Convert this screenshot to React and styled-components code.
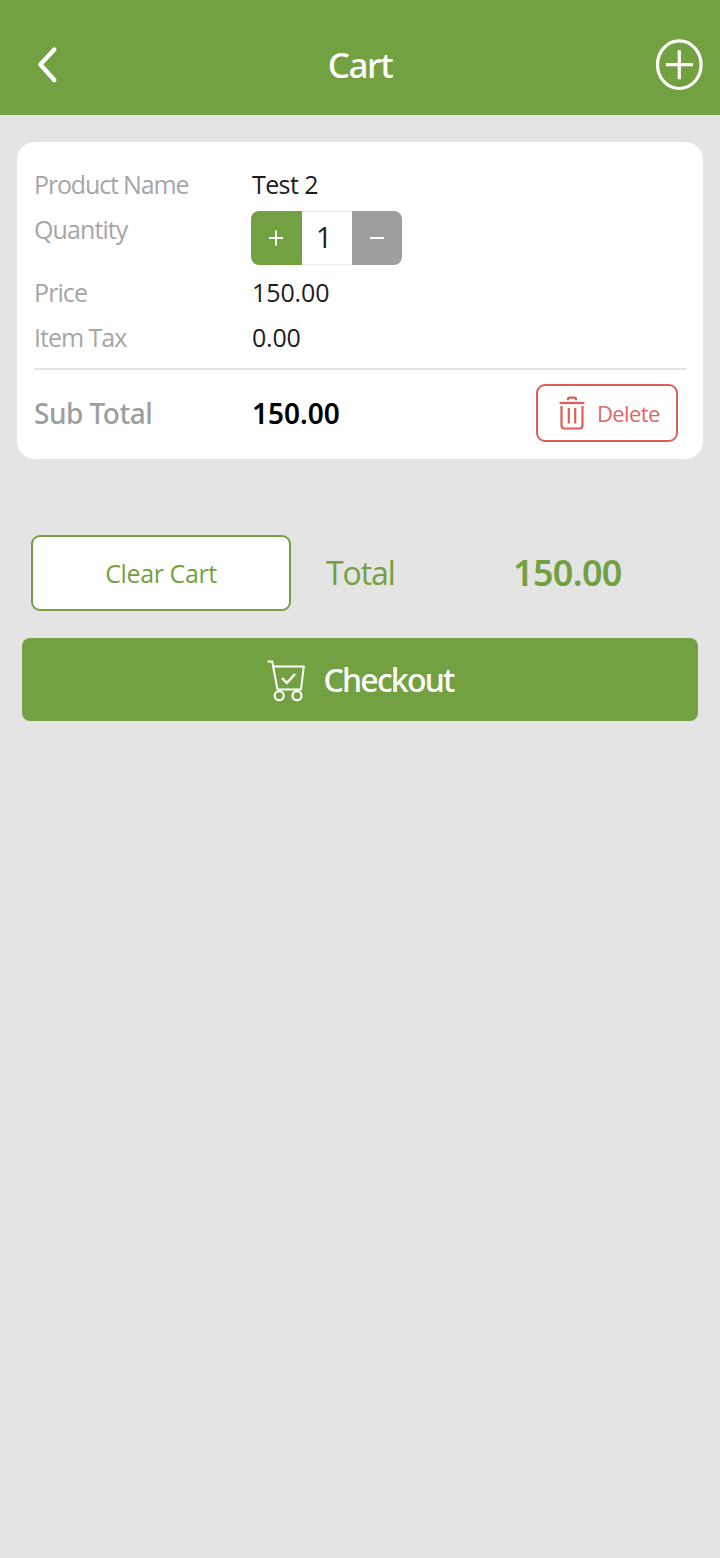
import React, { useState } from 'react';
import styled, { createGlobalStyle } from 'styled-components';

const PRICE = 150;

function App() {
  const [quantity, setQuantity] = useState(1);
  const subTotal = (PRICE * quantity).toFixed(2);

  return (
    <>
      <GlobalStyle />
      <Header>
        <IconButton aria-label='back'>
          <BackIcon />
        </IconButton>
        <Title>Cart</Title>
        <IconButton aria-label='add product'>
          <AddIcon />
        </IconButton>
      </Header>
      <Card>
        <Row>
          <Label $spacing='-1.15px'>Product Name</Label>
          <Value $spacing='-0.6px'>Test 2</Value>
        </Row>
        <Row $height='63px'>
          <Label $spacing='-0.9px'>Quantity</Label>
          <Stepper>
            <StepButton
              $color='#73a142'
              aria-label='increase'
              onClick={() => setQuantity(quantity + 1)}
            >
              <StepIcon plus />
            </StepButton>
            <Count>{quantity}</Count>
            <StepButton
              $color='#9e9e9e'
              aria-label='decrease'
              onClick={() => setQuantity(Math.max(1, quantity - 1))}
            >
              <StepIcon />
            </StepButton>
          </Stepper>
        </Row>
        <Row>
          <Label $spacing='-0.9px'>Price</Label>
          <Value $spacing='-0.1px'>{PRICE.toFixed(2)}</Value>
        </Row>
        <Row>
          <Label $spacing='-1px'>Item Tax</Label>
          <Value $spacing='-0.2px'>0.00</Value>
        </Row>
        <CardFooter>
          <SubLabel>Sub Total</SubLabel>
          <SubValue>{subTotal}</SubValue>
          <DeleteButton>
            <TrashIcon />
            <span>Delete</span>
          </DeleteButton>
        </CardFooter>
      </Card>
      <Summary>
        <ClearButton>Clear Cart</ClearButton>
        <TotalLabel>Total</TotalLabel>
        <TotalValue>{subTotal}</TotalValue>
      </Summary>
      <CheckoutButton>
        <CartIcon />
        <span>Checkout</span>
      </CheckoutButton>
    </>
  );
}

const BackIcon = () => (
  <svg width='24' height='40' viewBox='0 0 24 40' fill='none'>
    <path
      d='M19.3 4.5L5.3 19.5L19.3 35'
      stroke='#fff'
      strokeWidth='4.4'
      strokeLinecap='round'
      strokeLinejoin='round'
    />
  </svg>
);

const AddIcon = () => (
  <svg width='48' height='52' viewBox='0 0 48 52' fill='none' stroke='#fff'>
    <ellipse cx='24.3' cy='25.7' rx='21.8' ry='23.8' strokeWidth='3.2' />
    <path d='M24.3 11.2V40.2M10.8 25.7H37.8' strokeWidth='3.2' />
  </svg>
);

const StepIcon = ({ plus }) => (
  <svg width='16' height='16' viewBox='0 0 16 16' stroke='#fff'>
    <path d={plus ? 'M1 8H15M8 0.5V15.5' : 'M1 8H15'} strokeWidth='1.8' />
  </svg>
);

const TrashIcon = () => (
  <svg
    width='26'
    height='34'
    viewBox='0 0 26 34'
    fill='none'
    stroke='#dc5f57'
    strokeWidth='2.2'
  >
    <path d='M0.5 7H25.5' />
    <path d='M9 4.2V3.2Q9 1.6 10.5 1.6H15.5Q17 1.6 17 3.2V4.2' />
    <path d='M2.5 10V29.5Q2.5 32.5 5.5 32.5H20.5Q23.5 32.5 23.5 29.5V10' />
    <path d='M9.8 12V27.5M16.2 12V27.5' />
  </svg>
);

const CartIcon = () => (
  <svg
    width='38'
    height='42'
    viewBox='0 0 38 42'
    fill='none'
    stroke='#fff'
    strokeWidth='2'
  >
    <path d='M0.5 1.5H5.2L10.5 29.5H34L36.8 6.5H6.2' strokeLinejoin='round' />
    <path d='M15 18L19.8 23L28 14' strokeWidth='2.4' />
    <circle cx='12.2' cy='35.7' r='4.5' strokeWidth='2.2' />
    <circle cx='30' cy='35.7' r='4.5' strokeWidth='2.2' />
  </svg>
);

const GlobalStyle = createGlobalStyle`
  * {
    box-sizing: border-box;
  }
  body {
    margin: 0;
    min-height: 1558px;
    background: #e4e4e4;
    font-family: 'Open Sans', sans-serif;
  }
  button {
    padding: 0;
    border: none;
    font-family: inherit;
    cursor: pointer;
  }
  svg {
    display: block;
    flex-shrink: 0;
  }
`;

const Header = styled.header`
  height: 115px;
  padding: 14px 17px 0 35px;
  display: flex;
  align-items: center;
  justify-content: space-between;
  background: #73a142;
`;

const IconButton = styled.button`
  width: 48px;
  height: 52px;
  display: flex;
  align-items: center;
  background: transparent;
`;

const Title = styled.h1`
  margin: 0 0 0 -18px;
  color: #fff;
  font-family: 'Noto Sans', sans-serif;
  font-size: 35px;
  line-height: 48px;
  font-weight: 500;
  letter-spacing: -1.5px;
`;

const Card = styled.section`
  height: 317px;
  margin: 27px 17px 0;
  padding: 20px 16px 0 17px;
  background: #fff;
  border-radius: 18px;
`;

const Row = styled.div`
  height: ${({ $height }) => $height || '45px'};
  display: grid;
  grid-template-columns: 217px 1fr;
  align-items: start;
`;

const Label = styled.span`
  color: #a6a6a6;
  font-size: 25px;
  font-weight: 400;
  line-height: 45px;
  letter-spacing: ${({ $spacing }) => $spacing || '0'};
`;

const Value = styled(Label)`
  padding-left: 1px;
  color: #1c1c1c;
`;

const Stepper = styled.div`
  width: 151px;
  height: 54px;
  margin-top: 4px;
  display: flex;
  border-radius: 8px;
  overflow: hidden;
`;

const StepButton = styled.button`
  flex: 1;
  display: flex;
  align-items: center;
  justify-content: center;
  background: ${({ $color }) => $color};
`;

const Count = styled.span`
  width: 50px;
  padding-right: 5px;
  border: solid #ececec;
  border-width: 1px 0;
  color: #1c1c1c;
  font-size: 29px;
  line-height: 50px;
  text-align: center;
`;

const CardFooter = styled.div`
  height: 88px;
  margin-top: 8px;
  padding-right: 9px;
  display: grid;
  grid-template-columns: 218px 1fr auto;
  align-items: center;
  border-top: 2px solid #e4e4e4;
`;

const SubLabel = styled.span`
  color: #9e9e9e;
  font-family: 'Noto Sans', sans-serif;
  font-size: 28px;
  font-weight: 500;
  line-height: 40px;
  letter-spacing: -0.5px;
`;

const SubValue = styled(SubLabel)`
  color: #000;
  font-weight: 600;
  letter-spacing: 0;
`;

const DeleteButton = styled.button`
  width: 142px;
  height: 58px;
  margin-bottom: 1px;
  padding: 0 0 0 21px;
  display: flex;
  align-items: center;
  gap: 12px;
  background: #fff;
  border: 2px solid #dc5f57;
  border-radius: 9px;
  color: #d86a65;
  font-size: 22px;
  letter-spacing: -0.6px;
`;

const Summary = styled.div`
  height: 76px;
  margin: 76px 31px 0;
  display: grid;
  grid-template-columns: 260px 222px 1fr;
  align-items: center;
`;

const ClearButton = styled.button`
  height: 76px;
  background: #fff;
  border: 2px solid #73a142;
  border-radius: 9px;
  color: #73a142;
  font-size: 25px;
  letter-spacing: -0.4px;
`;

const TotalLabel = styled.span`
  padding-left: 35px;
  color: #73a142;
  font-size: 32px;
  font-weight: 400;
  line-height: 44px;
  letter-spacing: -1.1px;
`;

const TotalValue = styled.span`
  color: #73a142;
  font-family: 'Noto Sans', sans-serif;
  font-size: 36px;
  font-weight: 600;
  line-height: 44px;
  letter-spacing: -0.7px;
`;

const CheckoutButton = styled.button`
  width: 676px;
  height: 83px;
  margin: 27px 22px 0;
  display: flex;
  align-items: center;
  justify-content: center;
  gap: 19px;
  background: #73a142;
  border-radius: 8px;
  color: #fff;
  font-family: 'Noto Sans', sans-serif;
  font-size: 32px;
  font-weight: 500;
  letter-spacing: -1.8px;

  svg {
    position: relative;
    top: 1px;
  }
`;

export default App;
